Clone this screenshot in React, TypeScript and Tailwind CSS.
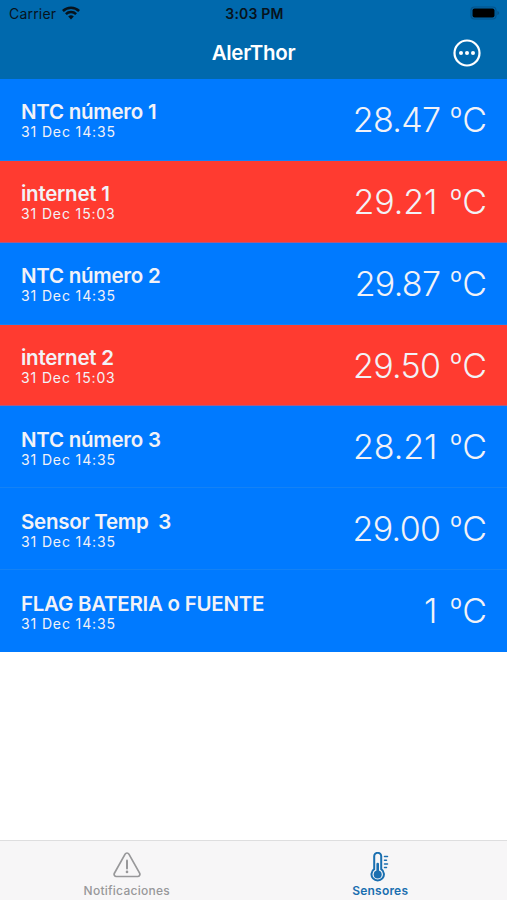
type Reading = {
  name: string;
  date: string;
  value: string;
  alarm?: boolean;
};

const readings: Reading[] = [
  { name: 'NTC número 1', date: '31 Dec 14:35', value: '28.47' },
  { name: 'internet 1', date: '31 Dec 15:03', value: '29.21', alarm: true },
  { name: 'NTC número 2', date: '31 Dec 14:35', value: '29.87' },
  { name: 'internet 2', date: '31 Dec 15:03', value: '29.50', alarm: true },
  { name: 'NTC número 3', date: '31 Dec 14:35', value: '28.21' },
  { name: 'Sensor Temp  3', date: '31 Dec 14:35', value: '29.00' },
  { name: 'FLAG BATERIA o FUENTE', date: '31 Dec 14:35', value: '1' },
];

function WifiIcon() {
  return (
    <svg width="18" height="14" viewBox="0 0 18 14" fill="none" stroke="currentColor" strokeWidth="2.5">
      <path d="M.9 5a11.5 11.5 0 0 1 16.2 0M3.9 8.2a7.2 7.2 0 0 1 10.2 0" />
      <path d="M6.2 10.5a4 4 0 0 1 5.6 0L9 13.4z" fill="currentColor" stroke="none" />
    </svg>
  );
}

function BatteryIcon() {
  return (
    <svg width="30" height="14" viewBox="0 0 30 14">
      <rect x="1" y="1" width="25" height="12" rx="3.5" fill="none" stroke="#04538a" strokeWidth="1.2" />
      <rect x="2.5" y="2.5" width="22" height="9" rx="2" fill="#000" />
      <path d="M27.3 5v4c1.2-.4 1.8-1.1 1.8-2s-.6-1.6-1.8-2z" fill="#04538a" />
    </svg>
  );
}

function MoreIcon() {
  return (
    <svg width="28" height="28" viewBox="0 0 28 28" fill="#fff">
      <circle cx="14" cy="14" r="12.5" fill="none" stroke="#fff" strokeWidth="2.2" />
      <circle cx="8" cy="14" r="2" />
      <circle cx="14" cy="14" r="2" />
      <circle cx="20" cy="14" r="2" />
    </svg>
  );
}

function WarningIcon() {
  return (
    <svg width="28" height="26" viewBox="0 0 28 26" fill="none" stroke="currentColor" strokeLinecap="round">
      <path
        d="M12.1 2.1a2.2 2.2 0 0 1 3.8 0l10.7 19.1a2.2 2.2 0 0 1-1.9 3.3H3.3a2.2 2.2 0 0 1-1.9-3.3z"
        strokeWidth="1.7"
      />
      <path d="M14 8.5v8" strokeWidth="2" />
      <circle cx="14" cy="19.9" r="1.3" fill="currentColor" stroke="none" />
    </svg>
  );
}

function ThermometerIcon() {
  return (
    <svg width="20" height="30" viewBox="0 0 20 30" fill="none" stroke="currentColor" strokeLinecap="round">
      <path d="M4.2 17.2V4.3a3.5 3.5 0 0 1 7 0v12.9a6.2 6.2 0 1 1-7 0z" strokeWidth="2" />
      <path d="M7.7 12v9" strokeWidth="2.6" />
      <circle cx="7.7" cy="22.4" r="4" fill="currentColor" stroke="none" />
      <path d="M14.5 4.5h3M14.5 8.2h2M14.5 11.9h3M14.5 15.6h2" strokeWidth="1.5" />
    </svg>
  );
}

function SensorRow({ name, date, value, alarm }: Reading) {
  const spacing = value.endsWith('1') ? 'mr-[12.5px] tracking-[-0.1px]' : 'mr-[9.5px] tracking-[-0.7px]';

  return (
    <li
      className={`flex h-[81.86px] items-center justify-between border-b pl-[21px] pr-5 text-[#f2f2f7] last:border-transparent ${
        alarm ? 'border-[#a85a88] bg-[#ff3b30]' : 'border-[#1482f5] bg-[#007aff]'
      }`}
    >
      <div className="pt-0.5">
        <p className="whitespace-pre text-[20.5px] font-[560] leading-6 tracking-[-0.26px]">{name}</p>
        <p className="text-[14px] leading-4 tracking-[0.87px]">{date}</p>
      </div>
      <p className="whitespace-nowrap pt-px text-[34px] font-[350] leading-10">
        <span className={spacing}>{value}</span>
        <span className="align-[4px] text-[29px] leading-none">º</span>
        <span>C</span>
      </p>
    </li>
  );
}

export default function App() {
  return (
    <div className="flex h-[900px] w-[507px] flex-col overflow-hidden bg-white font-['Inter',sans-serif]">
      <header className="h-[79px] shrink-0 bg-[#0069ad]">
        <div className="grid h-[27px] grid-cols-3 items-center pl-[9px] pr-[7px] text-[14px] text-[#07131c]">
          <div className="flex items-center gap-1.5 pb-px">
            <span className="tracking-[0.2px]">Carrier</span>
            <WifiIcon />
          </div>
          <span className="text-center font-semibold tracking-[0.2px]">3:03 PM</span>
          <span className="justify-self-end pb-px">
            <BatteryIcon />
          </span>
        </div>
        <div className="grid h-[51px] grid-cols-3 items-center px-[26px]">
          <h1 className="col-start-2 pt-px text-center text-[20.5px] font-semibold tracking-[-0.3px] text-white">AlerThor</h1>
          <button className="justify-self-end" aria-label="Más">
            <MoreIcon />
          </button>
        </div>
      </header>
      <ul className="flex-1">
        {readings.map((r) => (
          <SensorRow key={r.name} {...r} />
        ))}
      </ul>
      <nav className="grid h-[60px] shrink-0 grid-cols-2 border-t border-[#dededf] bg-[#f7f6f7] text-[12px] font-medium leading-4">
        <button className="flex flex-col items-center text-[#98989a]">
          <span className="flex h-[42px] items-end pb-[5px]">
            <WarningIcon />
          </span>
          <span className="tracking-[0.25px]">Notificaciones</span>
        </button>
        <button className="flex flex-col items-center text-[#1a6fb0]">
          <span className="flex h-[42px] items-end pb-px">
            <ThermometerIcon />
          </span>
          <span className="font-semibold tracking-[0.2px]">Sensores</span>
        </button>
      </nav>
    </div>
  );
}
